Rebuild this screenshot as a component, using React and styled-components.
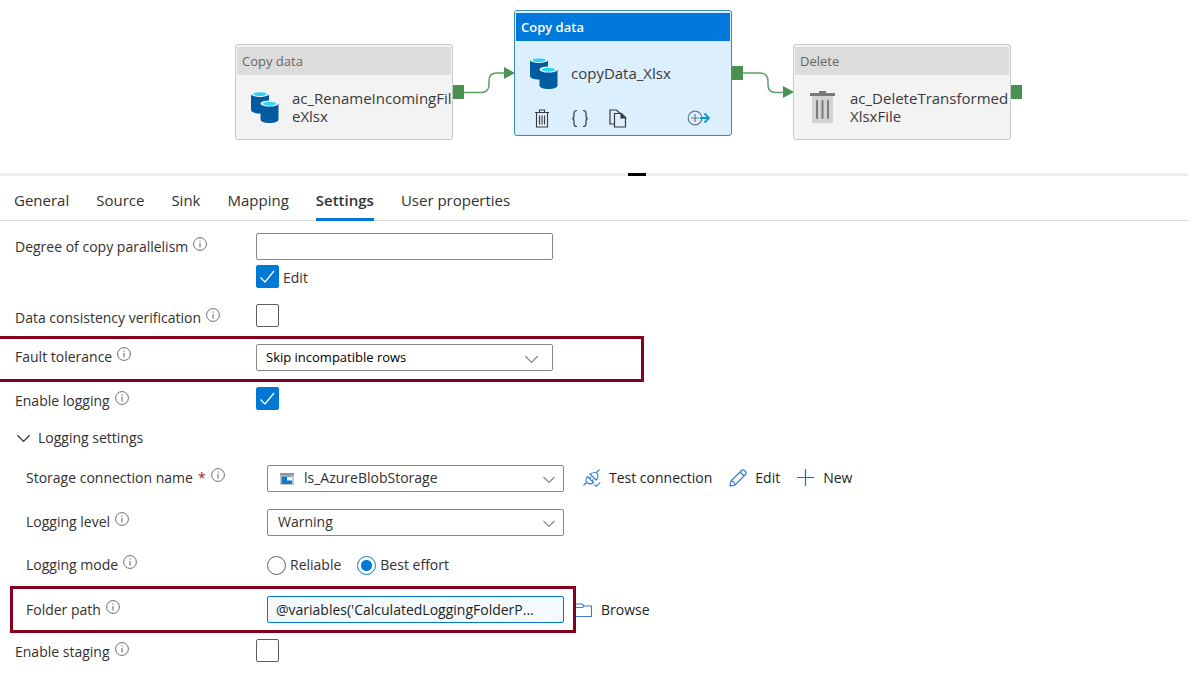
import { useState } from "react";
import styled, { createGlobalStyle } from "styled-components";

// Styled Components

const GlobalStyle = createGlobalStyle`
  * {
    box-sizing: border-box;
  }
  body {
    margin: 0;
    background: #fff;
  }
  body, button, input, select {
    font-family: "Open Sans", "Noto Sans", sans-serif;
    font-size: 15px;
    line-height: 20px;
    color: #323130;
  }
`;

const Page = styled.main`
  margin-right: 13px;
`;

const Canvas = styled.section`
  position: relative;
  height: 173px;
  overflow: hidden;
`;

const Links = styled.svg`
  position: absolute;
  top: 0;
  left: 0;
  pointer-events: none;
`;

const Node = styled.article`
  position: absolute;
  left: ${(props) => props.$x}px;
  top: ${(props) => props.$y}px;
  width: 218px;
  border: 1px solid ${(props) => (props.$active ? "#3c8dab" : "#c8c8c8")};
  border-radius: 3px;
  padding: 2px 1px 1px;
  background: ${(props) => (props.$active ? "#dceffe" : "#f3f3f3")};
`;

const NodeType = styled.header`
  height: 28px;
  padding: 0 5px;
  font-size: 13px;
  line-height: 28px;
  font-weight: ${(props) => (props.$active ? 600 : 400)};
  color: ${(props) => (props.$active ? "#fff" : "#666")};
  background: ${(props) => (props.$active ? "#0078dc" : "#dcdcdc")};
`;

const NodeBody = styled.div`
  display: flex;
  align-items: center;
  gap: 12px;
  height: 63px;
  padding-left: 13px;

  svg {
    flex-shrink: 0;
  }
`;

const NodeName = styled.div`
  font-size: 15px;
  line-height: 18px;
  white-space: pre;
  color: #3b3a39;
`;

const NodeTools = styled.div`
  display: flex;
  align-items: center;
  gap: 14px;
  height: 30px;
  padding: 0 20px 2px 14px;
`;

const ToolButton = styled.button`
  display: flex;
  justify-content: center;
  width: 24px;
  padding: 0;
  border: none;
  background: none;

  &:last-child {
    margin-left: auto;
  }
`;

const Splitter = styled.div`
  display: flex;
  justify-content: center;
  height: 3px;
  padding-left: 86px;
  background: #eee;
`;

const SplitterHandle = styled.span`
  width: 18px;
  background: #000;
`;

const Tabs = styled.nav`
  display: flex;
  gap: 27px;
  height: 45px;
  padding-left: 14px;
  border-bottom: 1px solid #dcdcdc;
`;

const Tab = styled.button`
  height: 45px;
  padding: 5px 0 0;
  border: none;
  border-bottom: 3px solid ${(props) => (props.$active ? "#0078d4" : "transparent")};
  background: none;
  font-weight: ${(props) => (props.$active ? 600 : 400)};
`;

const Row = styled.div`
  display: grid;
  grid-template-columns: 241px 1fr;
  align-items: center;
  min-height: ${(props) => props.$height}px;
  padding-left: ${(props) => (props.$nested ? 26 : 15)}px;
`;

const FirstRow = styled(Row)`
  align-items: start;
  padding-top: 12px;
`;

const Label = styled.label`
  display: flex;
  align-items: flex-start;
  gap: 5px;
  padding-top: ${(props) => (props.$lowered ? 4 : 0)}px;
  font-size: 14px;
  font-weight: 500;
`;

const Required = styled.span`
  color: #a4262c;
`;

const Field = styled.div`
  display: flex;
  align-items: center;
`;

const Stack = styled.div`
  display: grid;
  gap: 4px;
`;

const TextInput = styled.input`
  width: 297px;
  height: 27px;
  padding: 0 8px;
  border: 1px solid ${(props) => (props.$active ? "#0078d4" : "#8a8886")};
  border-radius: 2px;
  background: ${(props) => (props.$active ? "#f3f9fd" : "#fff")};
  font-size: 14px;
  color: #201f1e;
`;

const SelectWrap = styled.div`
  position: relative;
  width: 297px;

  svg {
    position: absolute;
    pointer-events: none;
  }
  .chevron {
    top: 10px;
    right: ${(props) => (props.$wide ? 14 : 9)}px;
  }
  .storage {
    top: 8px;
    left: 13px;
  }
`;

const SelectInput = styled.select`
  display: block;
  appearance: none;
  width: 100%;
  height: 27px;
  padding: 0 30px 0 ${(props) => props.$indent}px;
  border: 1px solid #8a8886;
  border-radius: 2px;
  background: #fff;
  font-size: ${(props) => (props.$small ? 13 : 14)}px;
  color: ${(props) => (props.$small ? "#000" : "#323130")};
`;

const CheckWrap = styled.span`
  position: relative;
  display: block;
  width: 23px;
  height: 23px;

  svg {
    position: absolute;
    top: 0;
    left: 0;
    pointer-events: none;
  }
`;

const CheckInput = styled.input`
  appearance: none;
  display: block;
  width: 23px;
  height: 23px;
  margin: 0;
  border: 1px solid #605e5c;
  border-radius: 2px;

  &:checked {
    border-color: #0078d4;
    background: #0078d4;
  }
`;

const Caption = styled.label`
  display: flex;
  align-items: center;
  gap: 4px;
  margin-right: 16px;
  font-size: 14px;
`;

const CaptionText = styled.span`
  padding-top: 4px;
`;

const RadioInput = styled.input`
  appearance: none;
  width: 19px;
  height: 19px;
  margin: 0;
  border: 1px solid #605e5c;
  border-radius: 50%;

  &:checked {
    border-color: #0078d4;
    background: radial-gradient(circle, #0078d4 5px, #fff 6px);
  }
`;

const FaultBox = styled.div`
  width: fit-content;
  padding: 0 88px 4px 0;
  border: 3px solid #84001c;
  border-left: none;
`;

const FolderRow = styled.div`
  display: flex;
  align-items: center;
`;

const FolderBox = styled.div`
  display: flex;
  align-items: center;
  position: relative;
  z-index: 1;
  height: 47px;
  margin-left: 10px;
  padding: 0 9px 0 13px;
  border: 3px solid #84001c;

  label {
    width: 241px;
  }
`;

const SectionButton = styled.button`
  display: flex;
  align-items: center;
  gap: 7px;
  height: 41px;
  padding: 4px 0 0 16px;
  border: none;
  background: none;
  font-size: 14px;
  font-weight: 500;
`;

const Actions = styled.div`
  display: flex;
  gap: 17px;
  margin-left: 19px;
`;

const ActionButton = styled.button`
  display: flex;
  align-items: center;
  gap: 8px;
  padding: 0;
  border: none;
  background: none;
  font-size: 14px;
  color: #201f1e;
`;

const BrowseButton = styled(ActionButton)`
  margin-left: -3px;
`;

// Icons

const CylindersIcon = () => (
  <svg width="30" height="34" viewBox="0 0 30 34">
    <path d="M1 4v16c0 2 4 3.500 9 3.500s9-1.500 9-3.500V4z" fill="#005ba1" />
    <ellipse cx="10" cy="4" rx="9" ry="3" fill="#e8f6fc" />
    <ellipse cx="10" cy="4.200" rx="6.500" ry="1.900" fill="#32d4f5" />
    <path d="M10.500 13.500v16c0 2 4 3.500 9 3.500s9-1.500 9-3.500v-16z" fill="#005ba1" />
    <ellipse cx="19.500" cy="13.500" rx="9" ry="3.100" fill="#e8f6fc" />
    <ellipse cx="19.500" cy="13.700" rx="6.700" ry="2" fill="#32d4f5" />
  </svg>
);

const BinIcon = () => (
  <svg width="30" height="34" viewBox="0 0 30 34">
    <path d="M4 6h21v25q0 2-2 2H6q-2 0-2-2z" fill="#d2d2d2" />
    <path d="M2 3h9V1h7v2h9v3H2z" fill="#7a7a7a" />
    <path d="M9 11v17M14.500 11v17M20 11v17" stroke="#7a7a7a" strokeWidth="2" strokeLinecap="round" />
  </svg>
);

const TrashIcon = () => (
  <svg width="16" height="19" viewBox="0 0 16 19" fill="none" stroke="#3b3a39" strokeWidth="1.100">
    <path d="M1 3.500h14M5.500 3V1h5v2M2.500 4v14h11V4M5.500 6.500v9M8 6.500v9M10.500 6.500v9" />
  </svg>
);

const BracesIcon = () => (
  <svg width="18" height="19" viewBox="0 0 18 19" fill="none" stroke="#3b3a39" strokeWidth="1.200">
    <path d="M6 1.500q-3 0-3 2.500v3q0 2.500-2 2.500 2 0 2 2.500v3q0 2.500 3 2.500M12 1.500q3 0 3 2.500v3q0 2.500 2 2.500-2 0-2 2.500v3q0 2.500-3 2.500" />
  </svg>
);

const CopyIcon = () => (
  <svg width="18" height="19" viewBox="0 0 18 19" fill="none" stroke="#3b3a39" strokeWidth="1.200">
    <path d="M5 15H1V1h6.500l3 3M5.500 4.500h7l4 4V18h-11z" />
    <path d="M12 4.500v4.500h4.500z" fill="#3b3a39" />
  </svg>
);

const AddOutputIcon = () => (
  <svg width="23" height="16" viewBox="0 0 23 16" fill="none" strokeWidth="1.200">
    <circle cx="8" cy="8" r="6.800" stroke="#68788a" />
    <path d="M4 8h8M8 4v8" stroke="#68788a" />
    <path d="M13 8h8M17.500 3.500L22 8l-4.500 4.500" stroke="#0099d0" strokeWidth="1.800" />
  </svg>
);

const InfoIcon = () => (
  <svg width="14" height="14" viewBox="0 0 14 14" fill="none" stroke="#605e5c">
    <circle cx="7" cy="7" r="6.400" strokeWidth=".9" />
    <path d="M7 6v4.500M7 3.500v1.200" />
  </svg>
);

const Chevron = ({ className, large, color = "#8a8078" }) => (
  <svg className={className} width={large ? 15 : 12} height={large ? 10 : 9} viewBox="0 0 12 9" fill="none" stroke={color} strokeWidth="1.100">
    <path d="M.5 2L6 7.500 11.500 2" />
  </svg>
);

const StorageIcon = () => (
  <svg className="storage" width="14" height="12" viewBox="0 0 14 12">
    <path d="M0 0h14v12H0z" fill="#c8c8c8" />
    <path d="M0 0h14v2.500H0z" fill="#949494" />
    <path d="M1.500 3.500H12V11H1.500z" fill="#0f78c8" />
    <path d="M7 4h5v3.500H7z" fill="#eef6fc" />
  </svg>
);

const PlugIcon = () => (
  <svg width="18" height="18" viewBox="0 0 18 18" fill="none" stroke="#2b7cd3" strokeWidth="1.100">
    <path d="M.5 16.500l3-3M13.500 3.500l3-3" />
    <path d="M4.500 7.500l6 6q-3 2.500-6 .5t0-6.500zM7 5l6 6q3-3 1.500-6T7 5z" />
    <path d="M6.500 9.500L8 8M9 12l1.500-1.500M11.500 15.500l1.800 1.800 4-4" />
  </svg>
);

const PencilIcon = () => (
  <svg width="18" height="18" viewBox="0 0 18 18" fill="none" stroke="#2b7cd3" strokeWidth="1.200">
    <path d="M1 17l1-5L12.500 1.500q1.500-1.500 3.500.5t.5 3.500L6 16zM11 3l4 4M2 12q3 0 4 4" />
  </svg>
);

const PlusIcon = () => (
  <svg width="18" height="18" viewBox="0 0 18 18" stroke="#0078d4" strokeWidth="1.200">
    <path d="M8.500 0v17M0 8.500h17" />
  </svg>
);

const FolderIcon = () => (
  <svg width="20" height="16" viewBox="0 0 20 16" fill="none" stroke="#3f78cf" strokeWidth="1.100">
    <path d="M1 14.500V2h8l2 2h7.500v10.500zM1 5.500h8.500L11 4" />
  </svg>
);

// Form pieces

function Checkbox({ id, defaultChecked = false }) {
  const [checked, setChecked] = useState(defaultChecked);

  return (
    <CheckWrap>
      <CheckInput type="checkbox" id={id} checked={checked} onChange={() => setChecked(!checked)} />
      {checked && (
        <svg width="23" height="23" viewBox="0 0 23 23" fill="none" stroke="#fff" strokeWidth="1.400">
          <path d="M4.500 12.500l4.500 4.500 9-11" />
        </svg>
      )}
    </CheckWrap>
  );
}

function FieldLabel({ id, required, lowered, children }) {
  return (
    <Label htmlFor={id} $lowered={lowered}>
      <span>{children}</span>
      {required && <Required>*</Required>}
      <InfoIcon />
    </Label>
  );
}

const tabs = ["General", "Source", "Sink", "Mapping", "Settings", "User properties"];

export default function App() {
  const [activeTab, setActiveTab] = useState("Settings");
  const [mode, setMode] = useState("best");
  const [loggingOpen, setLoggingOpen] = useState(true);

  return (
    <Page>
      <GlobalStyle />

      <Canvas>
        <Node $x={235} $y={44}>
          <NodeType>Copy data</NodeType>
          <NodeBody>
            <CylindersIcon />
            <NodeName>{"ac_RenameIncomingFil\neXlsx"}</NodeName>
          </NodeBody>
        </Node>
        <Node $x={514} $y={10} $active>
          <NodeType $active>Copy data</NodeType>
          <NodeBody>
            <CylindersIcon />
            <NodeName>copyData_Xlsx</NodeName>
          </NodeBody>
          <NodeTools>
            <ToolButton aria-label="Delete"><TrashIcon /></ToolButton>
            <ToolButton aria-label="Code"><BracesIcon /></ToolButton>
            <ToolButton aria-label="Clone"><CopyIcon /></ToolButton>
            <ToolButton aria-label="Add output"><AddOutputIcon /></ToolButton>
          </NodeTools>
        </Node>
        <Node $x={793} $y={44}>
          <NodeType>Delete</NodeType>
          <NodeBody>
            <BinIcon />
            <NodeName>{"ac_DeleteTransformed\nXlsxFile"}</NodeName>
          </NodeBody>
        </Node>
        <Links width="1040" height="173" viewBox="0 0 1040 173">
          <g fill="#499150">
            <path d="M453 85h11v14h-11zM732 66h11v14h-11zM1011 85h11v14h-11z" />
            <path d="M504 67l11 6-11 6zM783 86l11 6-11 6z" />
          </g>
          <g fill="none" stroke="#5ba066" strokeWidth="1.500">
            <path d="M464 92.500h17q8 0 8-8v-4q0-7.500 8-7.500h8" />
            <path d="M743 73h17q8 0 8 8v4q0 7.500 8 7.500h8" />
          </g>
        </Links>
      </Canvas>

      <Splitter>
        <SplitterHandle />
      </Splitter>

      <Tabs>
        {tabs.map((tab) => (
          <Tab key={tab} $active={tab === activeTab} onClick={() => setActiveTab(tab)}>
            {tab}
          </Tab>
        ))}
      </Tabs>

      <form onSubmit={(event) => event.preventDefault()}>
        <FirstRow $height={74}>
          <FieldLabel id="parallelism" lowered>Degree of copy parallelism</FieldLabel>
          <Stack>
            <TextInput type="text" id="parallelism" />
            <Caption>
              <Checkbox defaultChecked />
              <CaptionText>Edit</CaptionText>
            </Caption>
          </Stack>
        </FirstRow>

        <Row $height={41}>
          <FieldLabel id="consistency" lowered>Data consistency verification</FieldLabel>
          <Checkbox id="consistency" />
        </Row>

        <FaultBox>
          <Row $height={36}>
            <FieldLabel id="fault">Fault tolerance</FieldLabel>
            <SelectWrap $wide>
              <SelectInput id="fault" $indent={9} $small>
                <option>Skip incompatible rows</option>
              </SelectInput>
              <Chevron className="chevron" large />
            </SelectWrap>
          </Row>
        </FaultBox>

        <Row $height={33}>
          <FieldLabel id="logging" lowered>Enable logging</FieldLabel>
          <Checkbox id="logging" defaultChecked />
        </Row>

        <SectionButton type="button" onClick={() => setLoggingOpen(!loggingOpen)}>
          <Chevron large color="#323130" />
          Logging settings
        </SectionButton>

        {loggingOpen && (
          <>
            <Row $height={44} $nested>
              <FieldLabel id="storage" required>Storage connection name</FieldLabel>
              <Field>
                <SelectWrap>
                  <SelectInput id="storage" $indent={36}>
                    <option>ls_AzureBlobStorage</option>
                  </SelectInput>
                  <StorageIcon />
                  <Chevron className="chevron" />
                </SelectWrap>
                <Actions>
                  <ActionButton type="button"><PlugIcon />Test connection</ActionButton>
                  <ActionButton type="button"><PencilIcon />Edit</ActionButton>
                  <ActionButton type="button"><PlusIcon />New</ActionButton>
                </Actions>
              </Field>
            </Row>

            <Row $height={44} $nested>
              <FieldLabel id="level">Logging level</FieldLabel>
              <SelectWrap>
                <SelectInput id="level" $indent={10}>
                  <option>Warning</option>
                </SelectInput>
                <Chevron className="chevron" />
              </SelectWrap>
            </Row>

            <Row $height={42} $nested>
              <FieldLabel id="reliable">Logging mode</FieldLabel>
              <Field>
                <Caption>
                  <RadioInput type="radio" id="reliable" name="mode" checked={mode === "reliable"} onChange={() => setMode("reliable")} />
                  Reliable
                </Caption>
                <Caption>
                  <RadioInput type="radio" name="mode" checked={mode === "best"} onChange={() => setMode("best")} />
                  Best effort
                </Caption>
              </Field>
            </Row>

            <FolderRow>
              <FolderBox>
                <FieldLabel id="folder">Folder path</FieldLabel>
                <TextInput type="text" id="folder" $active defaultValue="@variables('CalculatedLoggingFolderP..." />
              </FolderBox>
              <BrowseButton type="button"><FolderIcon />Browse</BrowseButton>
            </FolderRow>
          </>
        )}

        <Row $height={34}>
          <FieldLabel id="staging" lowered>Enable staging</FieldLabel>
          <Checkbox id="staging" />
        </Row>
      </form>
    </Page>
  );
}
